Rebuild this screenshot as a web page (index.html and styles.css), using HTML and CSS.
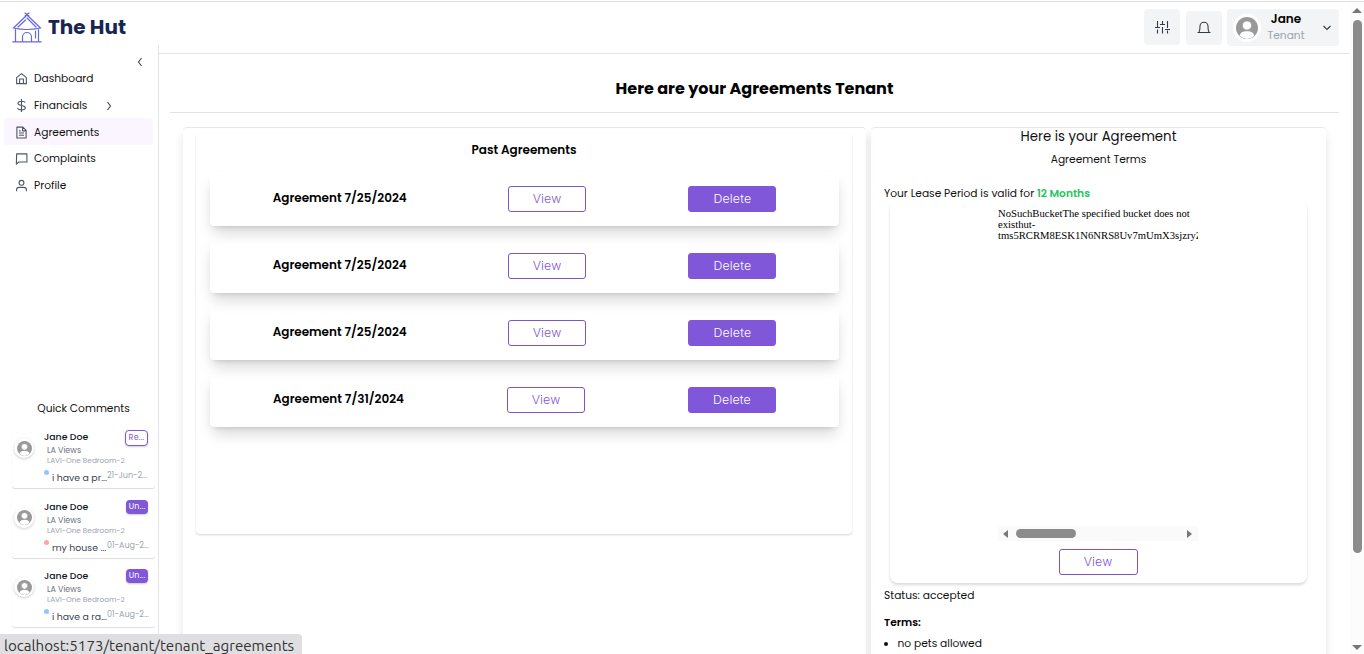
FILE: index.html
```
<!DOCTYPE html>
<html lang="en">
<head>
<meta charset="utf-8">
<title>The Hut</title>
<link rel="stylesheet" href="styles.css">
</head>
<body>
<svg class="defs" width="0" height="0">
  <symbol id="avatar" viewBox="0 0 24 24">
    <circle cx="12" cy="12" r="12" fill="#999"/>
    <path d="M4 20.500c.6-3.600 3.400-5 8-5s7.400 1.400 8 5A12 12 0 0 1 12 24a12 12 0 0 1-8-3.500z" fill="#fff"/>
    <circle cx="12" cy="9.300" r="5" fill="#fff" stroke="#999" stroke-width=".8"/>
  </symbol>
</svg>
<div class="window">
  <div class="app">
    <aside class="sidebar">
      <div class="brand">
        <svg class="logo" width="30" height="32" viewBox="0 0 30 32" fill="none" stroke="#6668e2" stroke-width="1.200" stroke-linecap="round">
          <path d="M13 2l4 3M17 2l-4 3M15 4L1.500 17q13.500 3 27 0L15 4M13.500 9L6 16M15 7l9 9M3.500 18.500V30.500M26.500 18.500V30.500M23.500 20v7M.7 30.800h28.600M10.500 30.500v-4.500a4.500 4.500 0 0 1 9 0v4.500"/>
        </svg>
        <span class="brand-name">The Hut</span>
      </div>
      <div class="side-body">
        <svg class="collapse" width="12" height="12" viewBox="0 0 12 12"><path d="M7.500 2L4.500 6l3 4"/></svg>
        <nav class="nav">
          <a class="nav-item"><svg class="ico" viewBox="0 0 24 24"><path d="M3 10.500L12 3l9 7.500V21.500H3zM8.500 21v-8h7v8"/></svg><span>Dashboard</span></a>
          <a class="nav-item"><svg class="ico" viewBox="0 0 24 24"><path d="M12 0v24M19 6.500C18 4.500 16 4 12 4c-4 0-6.500 1.300-6.500 4 0 5.600 13.500 2.300 13.500 8 0 2.700-3 4-7 4-3.500 0-6-.7-7.500-3"/></svg><span>Financials</span><svg class="more" width="12" height="12" viewBox="0 0 12 12"><path d="M4.500 2L7.500 6l-3 4"/></svg></a>
          <a class="nav-item active"><svg class="ico" viewBox="0 0 24 24"><path d="M3.500 2h11l6 6v14h-17zM14 2v7h6.500M7.500 9h3M7.500 13h9M7.500 17h9"/></svg><span>Agreements</span></a>
          <a class="nav-item"><svg class="ico" viewBox="0 0 24 24"><path d="M3 3.500h19v15H7l-4.500 4z"/></svg><span>Complaints</span></a>
          <a class="nav-item"><svg class="ico" viewBox="0 0 24 24"><path d="M3 22.500v-3c0-2.500 2-4 4.500-4h9c2.500 0 4.500 1.500 4.500 4v3"/><circle cx="12" cy="7" r="4.500"/></svg><span>Profile</span></a>
        </nav>
        <section class="comments">
          <h3>Quick Comments</h3>
          <article class="comment">
            <span class="face"><svg width="15" height="15"><use href="#avatar"/></svg></span>
            <div class="c-body">
              <div class="c-top"><b>Jane Doe</b><span class="tag outline">Re...</span></div>
              <p class="place">LA Views</p><p class="unit">LAVI-One Bedroom-2</p>
              <div class="c-msg"><i class="dot blue"></i><span class="msg">i have a pr...</span><span class="date">21-Jun-2...</span></div>
            </div>
          </article>
          <article class="comment">
            <span class="face"><svg width="15" height="15"><use href="#avatar"/></svg></span>
            <div class="c-body">
              <div class="c-top"><b>Jane Doe</b><span class="tag">Un...</span></div>
              <p class="place">LA Views</p><p class="unit">LAVI-One Bedroom-2</p>
              <div class="c-msg"><i class="dot red"></i><span class="msg">my house ...</span><span class="date">01-Aug-2...</span></div>
            </div>
          </article>
          <article class="comment">
            <span class="face"><svg width="15" height="15"><use href="#avatar"/></svg></span>
            <div class="c-body">
              <div class="c-top"><b>Jane Doe</b><span class="tag">Un...</span></div>
              <p class="place">LA Views</p><p class="unit">LAVI-One Bedroom-2</p>
              <div class="c-msg"><i class="dot blue"></i><span class="msg">i have a ra...</span><span class="date">01-Aug-2...</span></div>
            </div>
          </article>
        </section>
      </div>
    </aside>
    <div class="main">
      <header class="topbar">
        <span class="tool"><svg width="16" height="16" viewBox="0 0 16 16"><path d="M3.500 2v6M3.500 10.500V14.500M8.500 2v3.500M8.500 8v6.500M13.500 2v7M13.500 11.500V14.500M1 8.500h5M6 5.500h5M11 10.500h5"/></svg></span>
        <span class="tool bell"><svg width="16" height="16" viewBox="0 0 16 16"><path d="M1.500 13.500h13M3 13.200c1-1.500 1-3 1-6a4 4 0 0 1 8 0c0 3 0 4.500 1 6"/></svg></span>
        <div class="profile">
          <span class="photo"><svg width="22" height="22"><use href="#avatar"/></svg></span>
          <span class="who"><b>Jane</b><small>Tenant</small></span>
          <svg width="12" height="12" viewBox="0 0 12 12"><path d="M2.500 4L6 7.500 9.500 4"/></svg>
        </div>
      </header>
      <main class="content">
        <h1>Here are your Agreements Tenant</h1>
        <div class="cols">
          <section class="card past">
            <div class="list">
              <h2>Past Agreements</h2>
              <div class="row"><b>Agreement 7/25/2024</b><span class="btn">View</span><span class="btn solid">Delete</span></div>
              <div class="row"><b>Agreement 7/25/2024</b><span class="btn">View</span><span class="btn solid">Delete</span></div>
              <div class="row"><b>Agreement 7/25/2024</b><span class="btn">View</span><span class="btn solid">Delete</span></div>
              <div class="row last"><b>Agreement 7/31/2024</b><span class="btn">View</span><span class="btn solid">Delete</span></div>
            </div>
          </section>
          <section class="card current">
            <h2>Here is your Agreement</h2>
            <h4>Agreement Terms</h4>
            <p class="lease">Your Lease Period is valid for <b>12 Months</b></p>
            <div class="preview">
              <div class="frame">
                <div class="doc">NoSuchBucketThe specified bucket does not<br>existhut-<br>tms5RCRM8ESK1N6NRS8Uv7mUmX3sjzryZ</div>
                <div class="hbar"><i class="left"></i><i class="hthumb"></i><i class="right"></i></div>
              </div>
              <span class="btn wide">View</span>
            </div>
            <p class="status">Status: accepted</p>
            <p class="terms">Terms:</p>
            <ul><li>no pets allowed</li></ul>
          </section>
        </div>
      </main>
    </div>
  </div>
  <div class="vbar"><i class="up"></i><i class="vthumb"></i><i class="down"></i></div>
</div>
<div class="url">localhost:5173/tenant/tenant_agreements</div>
</body>
</html>
```
FILE: styles.css
```
* { box-sizing: border-box; margin: 0; padding: 0; }
body { width: 1364px; height: 654px; overflow: hidden; background: #fff; color: #111; font: 10.670px/16px Poppins, Inter, sans-serif; white-space: nowrap; }
svg { flex: none; display: block; }
.defs { position: absolute; }
.window { display: flex; height: 654px; overflow: hidden; border-top: 1px solid #fff; box-shadow: inset 0 1px 0 #dedede; }
.app { display: flex; width: 1350px; }
.sidebar { width: 159px; display: flex; flex-direction: column; }
.brand { height: 44px; padding: 10px 0 0 12px; display: flex; gap: 6px; }
.brand-name { font-size: 20px; line-height: 32px; font-weight: 700; color: #172554; }
.side-body { flex: 1; border-right: 1px solid #e2e3e5; }
.collapse { margin: 11px 0 0 134px; }
.collapse, .more { fill: none; stroke: #444; stroke-width: 1.1; }
.nav { display: grid; grid-auto-rows: 26.7px; padding: 0 5px 0 4px; margin-top: -3px; }
.nav-item { display: flex; align-items: center; padding-left: 11px; border-radius: 4px; }
.nav-item.active { background: #faf5ff; }
.nav-item span { margin: 2px 0 0 6px; }
.ico { width: 13px; height: 13px; fill: none; stroke: #4b5563; stroke-width: 2; stroke-linejoin: round; margin-top: 1px; }
.more { margin: 1px 0 0 16px; }
.comments { margin-top: 202px; padding-left: 12px; }
.comments h3 { font-size: 10.670px; font-weight: 400; line-height: 18px; width: 143px; text-align: center; height: 28px; }
.comment { display: flex; width: 143px; height: 60px; margin-bottom: 9.500px; border-radius: 3px; box-shadow: 0 1px 1px #ddd; color: #6b7280; }
.face { width: 20px; height: 20px; margin: 10px 0 0 2px; border-radius: 50%; box-shadow: 0 1px 3px #ccc; padding: 2px; flex: none; display: grid; place-items: center; }
.c-body { margin-left: 10px; width: 106px; }
.c-top { display: flex; justify-content: space-between; height: 17px; }
.c-top b { font-size: 9.330px; font-weight: 500; line-height: 17px; color: #111827; }
.tag { width: 22px; height: 14px; margin: 2px 2px 0 0; border-radius: 4px; font-size: 8px; line-height: 14px; letter-spacing: .2px; text-align: center; background: #8057d8; color: #fff; box-shadow: 0 1px 2px #ccc; }
.tag.outline { width: 23px; height: 16px; background: #fff; color: #8057d8; border: 1px solid #8057d8; line-height: 14px; }
.place { font-size: 8px; line-height: 11px; padding-left: 3px; }
.unit { font-size: 7.330px; line-height: 9px; padding-left: 3px; color: #9ca3af; }
.c-msg { display: flex; height: 22px; }
.dot { width: 5px; height: 5px; border-radius: 50%; margin-top: 5px; flex: none; }
.blue { background: #93c5fd; }
.red { background: #fca5a5; }
.msg { width: 55px; margin-left: 3px; font-size: 9.330px; line-height: 25px; color: #374151; flex: none; }
.date { font-size: 8px; line-height: 22px; color: #9ca3af; }

.main { flex: 1; }
.topbar { height: 53px; border-bottom: 1px solid #e2e3e5; display: flex; justify-content: flex-end; padding: 8px 11px 0 0; }
.topbar svg { fill: none; stroke: #333b47; stroke-width: 1.100; }
.tool { width: 36px; height: 36px; margin-right: 6px; background: #f3f4f6; border-radius: 4px; display: grid; place-items: center; }
.bell { margin-right: 5px; height: 34px; margin-top: 2px; padding-bottom: 2px; }
.profile { width: 112px; height: 37px; background: #f3f4f6; border-radius: 4px; display: flex; align-items: center; padding-left: 6px; }
.photo { width: 28px; height: 28px; border-radius: 50%; background: #fff; display: grid; place-items: center; }
.topbar .photo svg { stroke: none; }
.who { width: 50px; text-align: center; display: grid; margin-right: 10px; margin-top: -1px; }
.who b { font-size: 12px; font-weight: 600; line-height: 17px; color: #000; }
.who small { font-size: 10.670px; line-height: 18px; color: #9ca3af; }
.content { padding: 0 11px; }
h1 { height: 59px; border-bottom: 1px solid #e2e3e5; text-align: center; font-size: 16px; font-weight: 700; line-height: 69px; color: #000; }
.cols { display: flex; gap: 5px; padding: 14px 12px 0 13px; }
.card { height: 600px; border-top: 1px solid #e5e7eb; border-radius: 4px; box-shadow: 0 7px 10px #0000001c; }
.past { width: 683px; padding: 6px 13px; }
.list { width: 656px; height: 400px; border-radius: 4px; box-shadow: 0 1px 2px #0000002b; padding: 5px 14px; }
.list h2 { font-size: 12px; font-weight: 600; line-height: 22px; height: 33px; text-align: center; color: #000; }
.row { width: 629px; height: 54px; margin: 0 0 13px; border-radius: 4px; box-shadow: 0 9px 15px -3px #0000002c, 0 3px 5px -3px #00000028; display: flex; align-items: center; justify-content: space-around; padding: 0 11.500px; }
.row b { width: 133px; font-size: 12px; font-weight: 600; color: #000; margin-top: -2px; }
.row.last b { width: 131px; }
.btn { width: 78px; height: 26px; border: 1px solid #7c55c8; border-radius: 3px; color: #8057d8; text-align: center; font: 300 12.300px/24px Inter, sans-serif; letter-spacing: .15px; }
.solid { width: 88px; background: #8057d8; border-color: #8057d8; color: #fff; letter-spacing: .2px; }
.current { width: 455px; padding: 0 19px 0 13px; }
.current h2 { font-size: 13.330px; font-weight: 400; line-height: 17px; text-align: center; padding-left: 6px; }
.current h4 { font-size: 10.670px; font-weight: 400; text-align: center; padding-left: 6px; margin-top: 7px; }
.lease { margin-top: 18px; height: 15px; }
.lease b { color: #22c55e; font-weight: 600; }
.preview { width: 417px; height: 382px; margin-left: 6px; border-radius: 8px; box-shadow: 0 2px 3px #00000026; display: flex; flex-direction: column; align-items: center; padding: 7px 1px 0 0; }
.frame { width: 200px; height: 333px; overflow: hidden; display: flex; flex-direction: column; justify-content: space-between; }
.doc { font: 10.670px/11px "Liberation Serif", serif; color: #000; }
.hbar { height: 15px; background: #fafafa; display: flex; align-items: center; padding: 0 6px 0 5px; }
.left, .right { border: solid transparent; border-width: 4.500px 5px; width: 0; }
.left { border-left: 0; border-right-color: #777; }
.right { border-right: 0; border-left-color: #777; margin-left: auto; }
.hthumb { width: 60px; height: 9px; border-radius: 5px; background: #8b8b8b; margin-left: 8px; }
.wide { width: 79px; margin-top: 8px; }
.status { margin-top: 5px; }
.terms { margin-top: 11px; font-weight: 600; color: #000; }
ul { margin: 5px 0 0 13.500px; }
.vbar { width: 14px; background: #fcfcfc; margin-top: 1px; display: flex; flex-direction: column; align-items: center; padding: 6px 0 4px; }
.up, .down { border: solid transparent; border-width: 5px; height: 0; }
.up { border-top: 0; border-bottom-color: #777; }
.down { border-bottom: 0; border-top-color: #777; margin-top: auto; }
.vthumb { width: 9px; height: 533px; margin-top: 7px; border-radius: 5px; background: #8b8b8b; }
.url { position: absolute; left: 0; bottom: 0; width: 302px; height: 20px; padding-left: 4px; background: #dfdfe2; border-radius: 0 4px 0 0; font: 15.150px/24px Ubuntu, "Noto Sans", sans-serif; color: #333; }
```
